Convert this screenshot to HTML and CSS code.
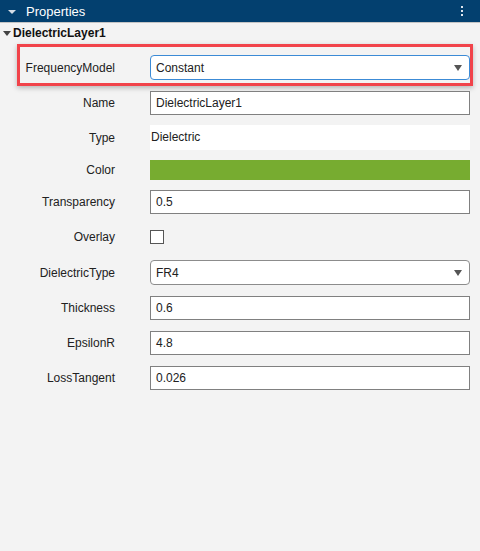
FILE: index.html
```html
<!DOCTYPE html>
<html>
<head>
<meta charset="utf-8">
<link rel="stylesheet" href="styles.css">
</head>
<body>
<div class="panel">
  <div class="header">
    <span class="hdr-tri"></span>
    <span class="hdr-title">Properties</span>
    <span class="hdr-menu"><i></i><i></i><i></i></span>
  </div>
  <div class="group-title">
    <span class="grp-tri"></span>
    <span>DielectricLayer1</span>
  </div>
  <div class="rows">
    <div class="row highlight">
      <div class="label">FrequencyModel</div>
      <div class="select focused"><span>Constant</span><span class="arrow"></span></div>
    </div>
    <div class="row">
      <div class="label">Name</div>
      <div class="input">DielectricLayer1</div>
    </div>
    <div class="row">
      <div class="label">Type</div>
      <div class="static">Dielectric</div>
    </div>
    <div class="row row-color">
      <div class="label">Color</div>
      <div class="swatch"></div>
    </div>
    <div class="row row-trans">
      <div class="label">Transparency</div>
      <div class="input">0.5</div>
    </div>
    <div class="row row-check">
      <div class="label">Overlay</div>
      <div><span class="checkbox"></span></div>
    </div>
    <div class="row">
      <div class="label">DielectricType</div>
      <div class="select"><span>FR4</span><span class="arrow"></span></div>
    </div>
    <div class="row">
      <div class="label">Thickness</div>
      <div class="input">0.6</div>
    </div>
    <div class="row">
      <div class="label">EpsilonR</div>
      <div class="input">4.8</div>
    </div>
    <div class="row">
      <div class="label">LossTangent</div>
      <div class="input">0.026</div>
    </div>
  </div>
</div>
</body>
</html>
```

FILE: styles.css
```css
html, body {
  margin: 0;
  padding: 0;
  background: #f3f3f3;
}
body {
  font-family: "Liberation Sans", Arial, sans-serif;
  font-size: 12px;
  color: #212121;
  width: 480px;
  height: 551px;
  overflow: hidden;
}
.header {
  height: 22px;
  background: #03406f;
  border-bottom: 1px solid #c4c4c4;
  display: flex;
  align-items: center;
  color: #ffffff;
}
.hdr-tri {
  width: 0;
  height: 0;
  border-left: 4px solid transparent;
  border-right: 4px solid transparent;
  border-top: 4px solid #d6dde6;
  margin-left: 8px;
  margin-right: 10px;
  margin-top: 1px;
}
.hdr-title {
  font-size: 13px;
  flex: 1;
}
.hdr-menu {
  display: flex;
  flex-direction: column;
  gap: 2px;
  margin-right: 17px;
}
.hdr-menu i {
  display: block;
  width: 2px;
  height: 2px;
  background: #dfe6ee;
}
.group-title {
  height: 20px;
  display: flex;
  align-items: center;
  font-weight: bold;
  font-size: 12px;
  color: #111;
}
.grp-tri {
  width: 0;
  height: 0;
  border-left: 4px solid transparent;
  border-right: 4px solid transparent;
  border-top: 5px solid #444;
  margin-left: 3px;
  margin-right: 2px;
}
.rows {
  padding-top: 7px;
}
.row {
  display: grid;
  grid-template-columns: 115px 320px;
  column-gap: 35px;
  height: 35px;
  align-items: center;
  position: relative;
}
.row-color {
  height: 30px;
}
.row-trans {
  height: 33px;
}
.row-check {
  height: 37px;
}
.label {
  text-align: right;
}
.highlight::after {
  content: "";
  position: absolute;
  left: 17px;
  top: -6px;
  width: 450px;
  height: 36px;
  border: 3px solid #f1434a;
  box-shadow: 0 2px 5px rgba(0, 0, 0, 0.25);
  pointer-events: none;
}
.input {
  height: 22px;
  line-height: 22px;
  border: 1px solid #808080;
  background: #fff;
  padding-left: 5px;
  box-sizing: content-box;
}
.static {
  height: 25px;
  line-height: 24px;
  background: #fff;
  padding-left: 1px;
}
.swatch {
  height: 20px;
  background: #77ac30;
}
.select {
  height: 23px;
  border: 1px solid #8c8c8c;
  border-radius: 4px;
  background: #fff;
  display: flex;
  align-items: center;
  justify-content: space-between;
  padding-left: 5px;
  padding-right: 7px;
}
.select.focused {
  border-color: #3c8bd6;
}
.arrow {
  width: 0;
  height: 0;
  border-left: 4px solid transparent;
  border-right: 4px solid transparent;
  border-top: 6px solid #555;
}
.checkbox {
  display: block;
  width: 12px;
  height: 12px;
  border: 1px solid #555;
  background: #fff;
}
```
